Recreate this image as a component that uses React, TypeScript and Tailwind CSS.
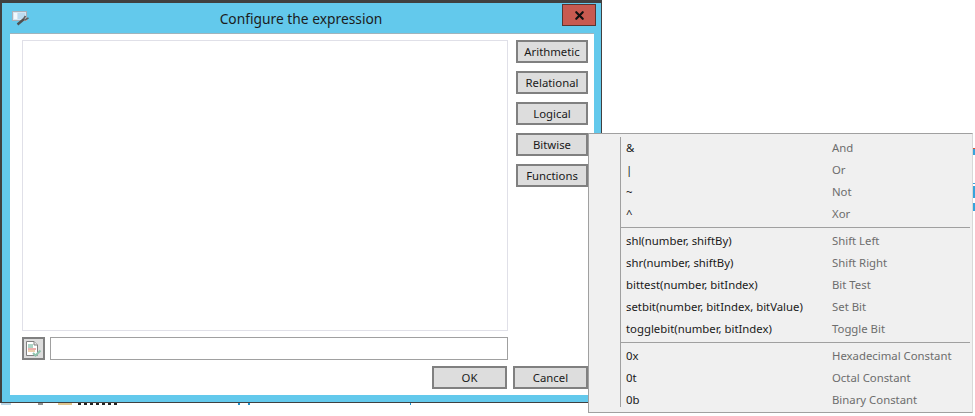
import { X } from 'lucide-react';

const btn = 'flex items-center justify-center pt-[1px] bg-[#dddddd] border-2 border-[#808080] text-[11.35px] text-[#1a1a1a]';

const menuGroups = [
  [
    ['&', 'And'],
    ['|', 'Or'],
    ['~', 'Not'],
    ['^', 'Xor'],
  ],
  [
    ['shl(number, shiftBy)', 'Shift Left'],
    ['shr(number, shiftBy)', 'Shift Right'],
    ['bittest(number, bitIndex)', 'Bit Test'],
    ['setbit(number, bitIndex, bitValue)', 'Set Bit'],
    ['togglebit(number, bitIndex)', 'Toggle Bit'],
  ],
  [
    ['0x', 'Hexadecimal Constant'],
    ['0t', 'Octal Constant'],
    ['0b', 'Binary Constant'],
  ],
];

function WindowIcon() {
  return (
    <svg width="18" height="15" viewBox="0 0 18 15" className="shrink-0">
      <rect x="0.5" y="0.5" width="14" height="9" fill="#d5e6f2" stroke="#a9b0b8" />
      <rect x="2" y="2" width="3" height="6" fill="#f2f8fc" />
      <rect x="6" y="2" width="7" height="6" fill="#bcdcf0" />
      <path d="M5.5 13.5 L12 8" stroke="#505050" strokeWidth="2.4" />
      <path d="M11.5 8 L13.5 5 M12.5 9 L16.5 7" stroke="#606060" strokeWidth="1.6" />
    </svg>
  );
}

function CheckDocIcon() {
  return (
    <svg width="17" height="17" viewBox="0 0 17 17">
      <path d="M1.5 1.5 H9 L12.5 5 V15.5 H1.5 Z" fill="#fff" stroke="#808080" />
      <path d="M9 1.5 V5 H12.5" fill="#e8e8e8" stroke="#808080" />
      <path d="M3 5 H8" stroke="#5aa88c" />
      <path d="M3 7 H8" stroke="#5aa88c" />
      <path d="M3 9 H11" stroke="#d9605a" />
      <path d="M3 11 H10" stroke="#d9a05a" />
      <path d="M8 13 L10.5 15.5 L15.5 10.5" fill="none" stroke="#8fc4ae" strokeWidth="2" />
    </svg>
  );
}

export default function App() {
  return (
    <div className="relative w-[975px] h-[416px] bg-white overflow-hidden font-['Noto_Sans',sans-serif]">
      <div className="flex flex-col w-[602px] h-[403px] bg-[#63c9ec] border-t-[3px] border-l-2 border-r border-b border-[#404040]">
        <div className="flex h-[30px] shrink-0">
          <div className="flex items-start pt-[8px] pl-[10px] w-[40px]">
            <WindowIcon />
          </div>
          <div className="flex-1 flex items-center justify-center pt-[2px] pr-[2px] text-[13.8px] text-[#1c1c1c]">
            Configure the expression
          </div>
          <div className="flex items-center justify-center w-[34px] h-[22px] mt-[1px] mr-[5px] bg-[#c75a50] border border-[#5a3530]">
            <X size={13} strokeWidth={4} className="text-[#111]" />
          </div>
        </div>
        <div className="flex flex-col ml-[8px] mr-[7px] h-[362px] bg-white border-t border-[#a0b4bc] pl-[12px] pr-[6px] pt-[6px]">
          <div className="flex gap-[8px] h-[291px]">
            <div className="w-[486px] border border-[#e0e0e8]" />
            <div className="flex flex-col gap-[8px]">
              {['Arithmetic', 'Relational', 'Logical', 'Bitwise', 'Functions'].map(label => (
                <div key={label} className={`${btn} w-[72px] h-[23px]`}>{label}</div>
              ))}
            </div>
          </div>
          <div className="flex gap-[5px] mt-[6px]">
            <div className="flex items-center justify-center w-[23px] h-[23px] bg-[#dddddd] border-2 border-[#808080]">
              <CheckDocIcon />
            </div>
            <div className="w-[458px] h-[23px] border border-[#a0a0a0]" />
          </div>
          <div className="flex justify-end gap-[6px] mt-[6px]">
            <div className={`${btn} w-[75px] h-[23px]`}>OK</div>
            <div className={`${btn} w-[75px] h-[23px]`}>Cancel</div>
          </div>
        </div>
      </div>

      {/* bits of the window behind, peeking out under the dialog */}
      <div className="flex items-start h-[2px]">
        <div className="w-[10px] h-[2px] ml-[1px] bg-[#b8d4e4]" />
        <div className="w-[5px] h-[2px] ml-[27px] bg-[#909090]" />
        <div className="w-[14px] h-[2px] ml-[15px] bg-[#e0c48c]" />
        <div className="w-[40px] h-[2px] ml-[6px] bg-[repeating-linear-gradient(90deg,#222_0,#222_3px,#fff_3px,#fff_6px)]" />
        <div className="w-[2px] h-[2px] ml-[120px] bg-[#1f8fc8]" />
        <div className="w-[2px] h-[2px] ml-[8px] bg-[#1f8fc8]" />
        <div className="w-[1px] h-[2px] ml-[160px] bg-[#1f8fc8]" />
      </div>

      <div className="absolute left-[973px] top-[148px] flex flex-col w-[2px]">
        <div className="h-[1px] bg-[#e05030]" />
        <div className="h-[6px] bg-[#36a3dc]" />
        <div className="h-[1px] mt-[28px] bg-[#36a3dc]" />
        <div className="h-[12px] mt-[2px] bg-[#36a3dc]" />
        <div className="h-[8px] mt-[5px] bg-[#36a3dc]" />
      </div>

      <div className="absolute left-[588px] top-[133px] w-[385px] h-[280px] bg-[#f0f0f0] border border-[#a0a0a0] border-r-[#d8d8d8] pt-[4px] pb-[4px] pl-[31px] pr-[2px] text-[11.35px]">
        <div className="h-full border-l border-[#a0a0a0]">
          <div className="-mt-[1px]">
            {menuGroups.map((group, i) => (
              <div key={i} className={i > 0 ? 'border-t border-[#a0a0a0] mt-[2px] pt-[2px]' : ''}>
                {group.map(([expr, name]) => (
                  <div key={name} className="flex items-center h-[22px] pl-[5px]">
                    <span className="w-[206px] text-[#1a1a1a]">{expr}</span>
                    <span className="text-[#6d6d6d]">{name}</span>
                  </div>
                ))}
              </div>
            ))}
          </div>
        </div>
      </div>
    </div>
  );
}
